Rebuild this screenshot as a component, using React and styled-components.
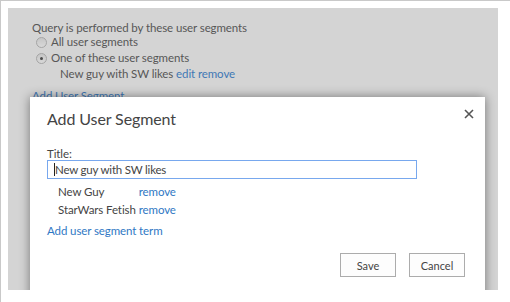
import React from 'react';
import styled, { createGlobalStyle } from 'styled-components';

const GlobalStyle = createGlobalStyle`
  html, body {
    margin: 0;
    padding: 0;
    background: #ffffff;
  }
  body {
    font-family: Lato, "Open Sans", "Liberation Sans", sans-serif;
    letter-spacing: -0.1px;
  }
`;

const Frame = styled.div`
  width: 497px;
  height: 289px;
  padding: 7px 6px 6px 7px;
  background: #ffffff;
  border-top: 1px solid #c9c9c9;
  border-left: 1px solid #c9c9c9;
  box-shadow: 1px 1px 0 #3c3c3c, 3px 3px 3px rgba(0, 0, 0, 0.55);
`;

const Screen = styled.div`
  position: relative;
  width: 490px;
  height: 282px;
  background: #d4d4d4;
  overflow: hidden;
`;

const PageBody = styled.div`
  padding: 12px 0 0 24px;
  color: #575757;
  font-size: 11.5px;
  line-height: 16px;
`;

const Label = styled.div`
  margin-bottom: -2px;
`;

const RadioRow = styled.label`
  display: flex;
  align-items: center;
  gap: 4px;
  padding-left: 4px;
`;

const Radio = styled.span`
  width: 9px;
  height: 9px;
  border-radius: 50%;
  border: 1px solid #a5a5a5;
  background: linear-gradient(#c6c6c6, #d8d8d8);
  display: flex;
  align-items: center;
  justify-content: center;

  &::after {
    content: '';
    width: 3px;
    height: 3px;
    border-radius: 50%;
    background: ${p => (p.$checked ? '#4c4c4c' : 'transparent')};
  }
`;

const SegmentLine = styled.div`
  padding-left: 28px;
`;

const PageLink = styled.span`
  color: #3f78b4;
`;

const AddLink = styled.div`
  color: #3f78b4;
  margin-top: 6px;
`;

const Dialog = styled.div`
  position: absolute;
  left: 22px;
  top: 89px;
  width: 455px;
  height: 230px;
  background: #ffffff;
  box-shadow: 0 0 10px rgba(0, 0, 0, 0.45);
  padding: 10px 11px 0 17px;
  box-sizing: border-box;
  color: #444444;
  font-size: 11.5px;
  line-height: 16px;
`;

const DialogHeader = styled.div`
  display: flex;
  justify-content: space-between;
  align-items: flex-start;
`;

const DialogTitle = styled.h2`
  margin: 0;
  font-size: 16px;
  font-weight: 400;
  line-height: 24px;
  letter-spacing: -0.1px;
  color: #444444;
`;

const CloseButton = styled.span`
  margin-top: 2px;
  display: flex;
`;

const FieldLabel = styled.div`
  margin-top: 16px;
  margin-bottom: -1px;
  line-height: 14px;
`;

const TextInput = styled.div`
  width: 370px;
  height: 19px;
  box-sizing: border-box;
  border: 1px solid #78a8ee;
  padding: 0 6px;
  display: flex;
  align-items: center;
  color: #444444;
  letter-spacing: -0.2px;
`;

const Caret = styled.span`
  width: 1px;
  height: 13px;
  background: #222222;
`;

const TermList = styled.div`
  margin-top: 5px;
  padding-left: 11px;
  display: grid;
  grid-template-columns: max-content max-content;
  justify-content: start;
  column-gap: 3px;
  row-gap: 2px;

  & > span:first-child {
    min-width: 76px;
  }
`;

const DialogLink = styled.span`
  color: #2f78c4;
`;

const AddTermLink = styled.div`
  color: #2f78c4;
  margin-top: 5px;
`;

const ButtonRow = styled.div`
  display: flex;
  justify-content: flex-end;
  gap: 13px;
  margin-top: 14px;
  padding-right: 9px;
`;

const Button = styled.button`
  width: 56px;
  height: 24px;
  border: 1px solid #acacac;
  background: #fdfdfd;
  font-family: Lato, "Open Sans", "Liberation Sans", sans-serif;
  font-size: 11px;
  color: #444444;
  padding: 0;
`;

const CloseIcon = () => (
  <svg width="10" height="10" viewBox="0 0 10 10">
    <path d="M1 1 L9 9 M9 1 L1 9" stroke="#555" strokeWidth="1.6" />
  </svg>
);

const App = () => {
  return (
    <>
      <GlobalStyle />
      <Frame>
        <Screen>
          <PageBody>
            <Label>Query is performed by these user segments</Label>
            <RadioRow>
              <Radio />
              All user segments
            </RadioRow>
            <RadioRow>
              <Radio $checked />
              One of these user segments
            </RadioRow>
            <SegmentLine>
              New guy with SW likes <PageLink>edit</PageLink> <PageLink>remove</PageLink>
            </SegmentLine>
            <AddLink>Add User Segment</AddLink>
          </PageBody>

          <Dialog>
            <DialogHeader>
              <DialogTitle>Add User Segment</DialogTitle>
              <CloseButton>
                <CloseIcon />
              </CloseButton>
            </DialogHeader>
            <FieldLabel>Title:</FieldLabel>
            <TextInput>
              <Caret />
              New guy with SW likes
            </TextInput>
            <TermList>
              <span>New Guy</span>
              <DialogLink>remove</DialogLink>
              <span>StarWars Fetish</span>
              <DialogLink>remove</DialogLink>
            </TermList>
            <AddTermLink>Add user segment term</AddTermLink>
            <ButtonRow>
              <Button>Save</Button>
              <Button>Cancel</Button>
            </ButtonRow>
          </Dialog>
        </Screen>
      </Frame>
    </>
  );
};

export default App;
